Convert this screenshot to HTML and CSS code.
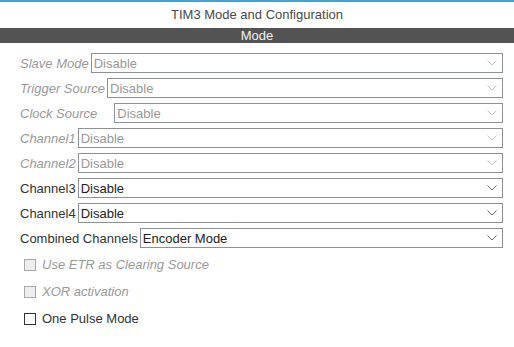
FILE: index.html
```html
<!DOCTYPE html>
<html lang="en">
<head>
    <meta charset="UTF-8">
    <title>TIM3 Mode and Configuration</title>
    <link rel="stylesheet" href="styles.css">
</head>
<body>
    <div class="topline"></div>
    <div class="title">TIM3 Mode and Configuration</div>
    <div class="section-bar">Mode</div>

    <div class="form">
        <div class="row disabled">
            <span class="label">Slave Mode</span>
            <div class="select"><span>Disable</span><svg class="chev" viewBox="0 0 10 6"><path d="M0.5 0.5 L5 5 L9.5 0.5"/></svg></div>
        </div>
        <div class="row disabled">
            <span class="label">Trigger Source</span>
            <div class="select"><span>Disable</span><svg class="chev" viewBox="0 0 10 6"><path d="M0.5 0.5 L5 5 L9.5 0.5"/></svg></div>
        </div>
        <div class="row disabled">
            <span class="label label-clock">Clock Source</span>
            <div class="select"><span>Disable</span><svg class="chev" viewBox="0 0 10 6"><path d="M0.5 0.5 L5 5 L9.5 0.5"/></svg></div>
        </div>
        <div class="row disabled">
            <span class="label">Channel1</span>
            <div class="select"><span>Disable</span><svg class="chev" viewBox="0 0 10 6"><path d="M0.5 0.5 L5 5 L9.5 0.5"/></svg></div>
        </div>
        <div class="row disabled">
            <span class="label">Channel2</span>
            <div class="select"><span>Disable</span><svg class="chev" viewBox="0 0 10 6"><path d="M0.5 0.5 L5 5 L9.5 0.5"/></svg></div>
        </div>
        <div class="row">
            <span class="label">Channel3</span>
            <div class="select"><span>Disable</span><svg class="chev" viewBox="0 0 10 6"><path d="M0.5 0.5 L5 5 L9.5 0.5"/></svg></div>
        </div>
        <div class="row">
            <span class="label">Channel4</span>
            <div class="select"><span>Disable</span><svg class="chev" viewBox="0 0 10 6"><path d="M0.5 0.5 L5 5 L9.5 0.5"/></svg></div>
        </div>
        <div class="row">
            <span class="label">Combined Channels</span>
            <div class="select"><span>Encoder Mode</span><svg class="chev" viewBox="0 0 10 6"><path d="M0.5 0.5 L5 5 L9.5 0.5"/></svg></div>
        </div>

        <div class="checks">
            <div class="check disabled"><span class="box"></span><span>Use ETR as Clearing Source</span></div>
            <div class="check disabled"><span class="box"></span><span>XOR activation</span></div>
            <div class="check"><span class="box"></span><span>One Pulse Mode</span></div>
        </div>
    </div>
</body>
</html>
```

FILE: styles.css
```css
body {
    margin: 0;
    padding: 0;
    font-family: "Liberation Sans", Arial, sans-serif;
    font-size: 13px;
    color: #333;
    background-color: #fff;
}
.topline {
    height: 2px;
    background-color: #3ca6d8;
}
.title {
    height: 26px;
    line-height: 26px;
    text-align: center;
    color: #4a4a4a;
}
.section-bar {
    height: 15px;
    line-height: 15px;
    background-color: #535353;
    color: #f2f2f2;
    text-align: center;
    font-size: 13px;
}
.form {
    padding: 10px 11px 0 20px;
}
.row {
    display: flex;
    align-items: center;
    height: 20px;
    margin-bottom: 5px;
}
.label {
    white-space: nowrap;
    margin-right: 2px;
}
.label-clock {
    margin-right: 17px;
}
.select {
    flex: 1;
    height: 18px;
    border: 1px solid #8e9296;
    background-color: #fff;
    display: flex;
    align-items: center;
    justify-content: space-between;
    padding: 0 5px 0 2px;
    color: #222;
}
.chev {
    width: 10px;
    height: 6px;
    fill: none;
    stroke: #666;
    stroke-width: 1;
}
.disabled .label {
    font-style: italic;
    color: #999;
}
.disabled .select {
    color: #999;
}
.disabled .chev {
    stroke: #c4c4c4;
}
.checks {
    margin-top: -2px;
    padding-left: 4px;
}
.check {
    display: flex;
    align-items: center;
    height: 27px;
}
.check .box {
    width: 10px;
    height: 10px;
    border: 1px solid #333;
    background-color: #fff;
    margin-right: 6px;
}
.check.disabled {
    color: #999;
    font-style: italic;
}
.check.disabled .box {
    border-color: #a8a8a8;
    background-color: #eceeef;
}
```
